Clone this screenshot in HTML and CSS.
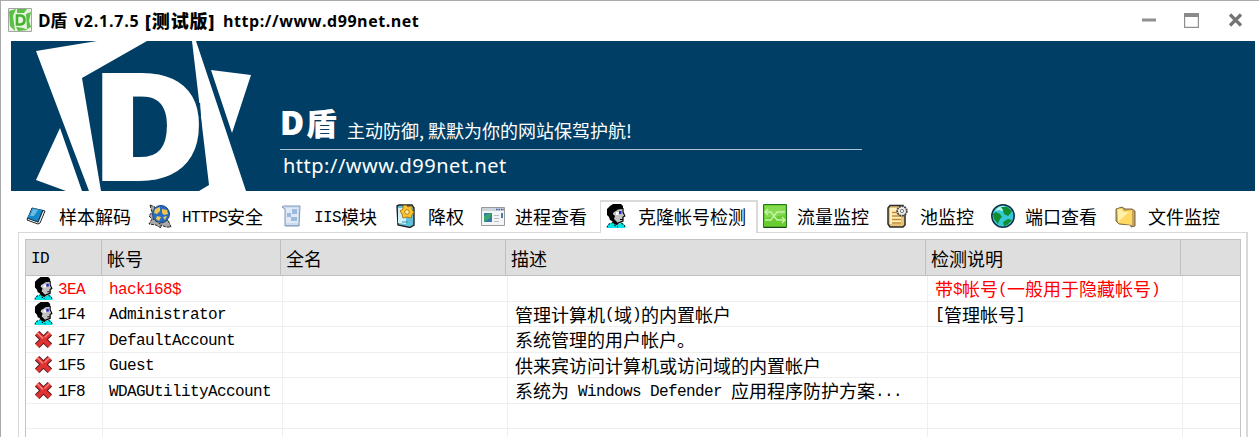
FILE: index.html
```html
<!DOCTYPE html>
<html lang="zh-CN">
<head>
<meta charset="utf-8">
<title>D盾</title>
<link rel="stylesheet" href="styles.css">
</head>
<body>
<svg width="0" height="0" class="defs">
  <defs>
    <symbol id="user" viewBox="0 0 20 24">
      <path fill="#00e5e8" d="M1 24 2 20.500 7 18 12 21 15 18 18 20 19.500 24Z"/>
      <path fill="none" stroke="#000" stroke-width="1" stroke-dasharray="2 1.500" d="M1 23.500 2 20.500 7 18.500M19 23 18 20.500 14 19M8 21 12 23"/>
      <path fill="#c3c3c3" d="M8 6 16 4 17 10 18.500 13 17 14 17 18 13 20 8 18Z"/>
      <path d="M4 2 7 0H15L17 2V5L12 5.500 10 7 8 8 7 10 9 12 8 15 10 17 13 20 11 21 8 20 6 17 4 16 3 13 1 11V5Z"/>
      <path fill="none" stroke="#000" stroke-width="1.200" d="M17 4V8L18.800 12 17 13V17L12 19"/>
      <path fill="#fff" d="M10 8H12.500V11H10Z"/>
      <path fill="#2222d0" d="M13 7H15.500V10H13Z"/>
      <path stroke="#000" d="M14 15.500H17"/>
    </symbol>
    <symbol id="cross" viewBox="0 0 18 18">
      <path fill="none" stroke="#4a1818" stroke-width="6" d="M3 3 15 15M15 3 3 15"/>
      <path fill="none" stroke="#e03232" stroke-width="4.300" d="M3 3 15 15M15 3 3 15"/>
      <path fill="none" stroke="#ff8a83" stroke-width="1.300" d="M3 2.500 8.500 8M14.500 2.500 10 7"/>
    </symbol>
  </defs>
</svg>
<div class="window">
  <header class="titlebar">
    <svg class="app-icon" viewBox="0 0 24 24">
      <path fill="#e6f4e1" stroke="#a5a5a5" d="M.5.5H23.500V23.500H.5Z"/>
      <path fill="#5bbf46" d="M1 3 8 1 5 8 7 23 2 18ZM9 1H19L16 5 9 5ZM18 6 23 4 21 13 23 19 19 21ZM8 19 15 20 20 22 10 23Z"/>
      <path fill="none" stroke="#43b02e" stroke-width="2.600" d="M9 7.500H12.500Q16.500 8 16.500 12T12.500 16.500H9Z"/>
    </svg>
    <div class="title">
      <span class="t-name">D盾</span><span class="t-ver">v2.1.7.5</span><span class="t-beta">[测试版]</span><span class="t-url">http://www.d99net.net</span>
    </div>
    <svg class="controls" viewBox="0 0 105 22">
      <path fill="#8f8f8f" d="M0 9.500H14V12.500H0Z"/>
      <path fill="#fff" stroke="#8f8f8f" stroke-width="1.200" d="M42.600 4.600H56.400V18.400H42.600Z"/>
      <path fill="#8a8a8a" d="M42 4H57V8H42Z"/>
      <path fill="none" stroke="#757575" stroke-width="3.200" d="M88 5.500 99 16.500M99 5.500 88 16.500"/>
    </svg>
  </header>
  <section class="banner">
    <svg class="logo" viewBox="0 0 262 150">
      <g fill="#fff">
        <path d="M25 10 86 0H136L71 37 90 150H78Z"/>
        <path d="M49 87 71 150H55L25 139Z"/>
        <path d="M181 0H185L235 150H188L198 144Z"/>
        <path d="M200 29 240 34 221 92Z"/>
      </g>
      <text class="logo-d" x="79" y="140" textLength="117" lengthAdjust="spacingAndGlyphs">D</text>
      <path fill="none" stroke="#003e65" stroke-width="1.200" d="M188.500 62 191.500 112"/>
    </svg>
    <div class="slogan">
      <div class="slogan-top"><span class="brand-d">D</span><span class="brand-cn">盾</span><span class="tagline">主动防御<i>,</i>默默为你的网站保驾护航<i>!</i></span></div>
      <div class="site">http://www.d99net.net</div>
    </div>
  </section>
  <nav class="tabs">
    <div class="tab"><svg class="icon" viewBox="0 0 24 24"><path fill="#fff" stroke="#222" d="M7 4 20 7 15 19 13 20 2 16Z"/><path fill="#1688c8" d="M8 4 18 6 13 18 2 14Z"/><path fill="#66bde6" d="M8 5 13 6 9 12 5 12Z"/><path fill="none" stroke="#10394f" stroke-width="1.300" d="M2 14 13 18 18 6"/></svg>样本解码</div>
    <div class="tab"><svg class="icon" viewBox="0 0 24 24"><path fill="#aaa" stroke="#222" stroke-dasharray="3 1" d="M2 1 7 3 5 15 12 20 20 16 23 23H18L13 21V24L8 21 1 20 4 15 1 12 4 8Z"/><circle cx="13" cy="10" r="8.500" fill="#286dc1" stroke="#174783"/><path fill="#f1c64f" d="M7 5 12 3 12 7 9 10 6 9ZM14 5 19 6 20 10 16 11 14 9ZM9 12 13 13 11 17 8 15ZM15 13 19 12 17 16Z"/></svg><span class="lat">HTTPS</span>安全</div>
    <div class="tab"><svg class="icon" viewBox="0 0 24 24"><path fill="#c9dcef" stroke="#8199b8" d="M3.500 2H20L19 22H5V5L2 3Z"/><path fill="#dfeaf6" d="M6 4H18V19H6Z"/><path fill="#9cbbdc" d="M7 9H11V13H7ZM12 5H17V10H12ZM11 13H17V17H11Z"/><path stroke="#8da6c3" d="M5 21.500H20"/></svg><span class="lat">IIS</span>模块</div>
    <div class="tab"><svg class="icon" viewBox="0 0 24 24"><path fill="#5fc0dc" stroke="#202020" stroke-width="1.400" d="M3 2 5 1H18L20 4V21L16 23.500 4 21Z"/><path fill="#d3f1f8" d="M4 4H12V20L4 19Z"/><path fill="#fac52e" stroke="#ae7417" d="M12 1 14 3 18 2 18 6 20 8 18 11 17 14 13 13 9 14 8 10 6 7 9 5 9 2Z"/><circle cx="13" cy="8" r="2.300" fill="#fff0a0" stroke="#bb7b14"/><path stroke="#338da8" d="M8 18H14"/></svg>降权</div>
    <div class="tab"><svg class="icon" viewBox="0 0 24 24"><path fill="#f4f5f6" stroke="#999" d="M.5 3.500H23.500V21.500H.5Z"/><path fill="#ccd3dc" d="M1 4H23V7H1Z"/><path stroke="#4355a0" stroke-width="1.500" stroke-dasharray="1.500 1" d="M15 5.500H23"/><path fill="#3477a8" d="M3 9H11V18H3Z"/><path fill="#3ca56b" d="M3 18V12L7 10 11 9 9 14Z"/><path stroke="#bbb" d="M13 11.500H18M13 14.500H18M13 17.500H18"/><path fill="#477db4" d="M20 9H22V14H20Z"/></svg>进程查看</div>
    <div class="tab active"><svg class="icon user"><use href="#user"/></svg>克隆帐号检测</div>
    <div class="tab"><svg class="icon" viewBox="0 0 24 24"><path fill="#69cd32" stroke="#26791c" d="M.5.5H23.500V23.500H.5Z"/><path fill="#86da52" d="M2 2H22V11L2 14Z"/><path fill="none" stroke="#c8f3a8" stroke-width="1.300" d="M2 8H8L14 16H22M2 16H8L14 8H22M5 5 2 8 5 11M19 13 22 16 19 19"/><path stroke="#174b12" stroke-width="1.500" d="M1 23.500H23"/></svg>流量监控</div>
    <div class="tab"><svg class="icon" viewBox="0 0 24 24"><path fill="#e7c27a" stroke="#292929" stroke-width="1.500" d="M4 1.500H17V5L19 8V21L17 23H4L2 20V4Z"/><path fill="#fff1bc" d="M4 4H15V20H4Z"/><path stroke="#c6862c" stroke-width="1.500" d="M6 8.500H11M6 12H15M6 15.500H15M6 19H15"/><circle cx="16" cy="7" r="4.800" fill="#ececec" stroke="#444" stroke-width="1.800" stroke-dasharray="2 .7"/><circle cx="16" cy="7" r="1.600" fill="#fff" stroke="#777"/></svg>池监控</div>
    <div class="tab"><svg class="icon" viewBox="0 0 24 24"><circle cx="12" cy="12" r="11.200" fill="#35c8d6" stroke="#102f43" stroke-width="1.500"/><path fill="#b9f3e7" d="M4 7Q7 2 13 2L15 5 11 7 8 6Z"/><path fill="#118d30" d="M2 10 5 8 9 10 11 13 9 15 7 20 3 15ZM10 3H16L21 7 19 10 17 12 13 10 12 6ZM12 18 17 15 21 16 16 21 13 22Z"/></svg>端口查看</div>
    <div class="tab"><svg class="icon" viewBox="0 0 24 24"><path fill="#c7a35c" stroke="#796643" d="M2 5 8 3 11 5H18L21 7V22L17 23V21L5 20 2 17Z"/><path fill="#ffd964" d="M3 5 8 4 10 7 18 6V21L4 19Z"/><path fill="#fff1a8" d="M4 6 8 5 9 8H15L5 17H4Z"/></svg>文件监控</div>
  </nav>
  <main class="page">
    <div class="grid">
      <div class="row head"><div><span class="lat">ID</span></div><div>帐号</div><div>全名</div><div>描述</div><div>检测说明</div><div></div></div>
      <div class="rows">
        <div class="row danger"><div><svg class="row-icon user"><use href="#user"/></svg><span class="lat">3EA</span></div><div><span class="lat">hack168$</span></div><div></div><div></div><div>带<span class="lat">$</span>帐号<span class="lat">(</span>一般用于隐藏帐号<span class="lat">)</span></div><div></div></div>
        <div class="row"><div><svg class="row-icon user"><use href="#user"/></svg><span class="lat">1F4</span></div><div><span class="lat">Administrator</span></div><div></div><div>管理计算机<span class="lat">(</span>域<span class="lat">)</span>的内置帐户</div><div><span class="lat">[</span>管理帐号<span class="lat">]</span></div><div></div></div>
        <div class="row"><div><svg class="row-icon"><use href="#cross"/></svg><span class="lat">1F7</span></div><div><span class="lat">DefaultAccount</span></div><div></div><div>系统管理的用户帐户。</div><div></div><div></div></div>
        <div class="row"><div><svg class="row-icon"><use href="#cross"/></svg><span class="lat">1F5</span></div><div><span class="lat">Guest</span></div><div></div><div>供来宾访问计算机或访问域的内置帐户</div><div></div><div></div></div>
        <div class="row"><div><svg class="row-icon"><use href="#cross"/></svg><span class="lat">1F8</span></div><div><span class="lat">WDAGUtilityAccount</span></div><div></div><div>系统为<span class="lat"> Windows Defender </span>应用程序防护方案<span class="lat">...</span></div><div></div><div></div></div>
        <div class="row"><div></div><div></div><div></div><div></div><div></div><div></div></div>
        <div class="row"><div></div><div></div><div></div><div></div><div></div><div></div></div>
      </div>
    </div>
  </main>
</div>
</body>
</html>
```
FILE: styles.css
```css
* { box-sizing: border-box; }
body {
  margin: 0;
  background: #fff;
  color: #000;
  font: 18px/24px "Noto Sans CJK SC", sans-serif;
  overflow: hidden;
}
.defs { position: absolute; }
.window {
  height: 437px;
  border-top: 1px solid #aaa;
  border-left: 1px solid #aaa;
  overflow: hidden;
  display: flex;
  flex-direction: column;
}
.titlebar {
  flex: 0 0 40px;
  display: flex;
  align-items: center;
  padding: 0 12px 2px 7px;
}
.app-icon { width: 24px; height: 24px; flex: none; }
.title {
  flex: 1;
  display: flex;
  margin-left: 6px;
  padding-top: 2px;
  font: 700 16px/24px "Open Sans", "Noto Sans CJK SC", sans-serif;
  white-space: nowrap;
}
.t-name { width: 36px; font-size: 17px; letter-spacing: -.3px; }
.t-ver { width: 71px; letter-spacing: .75px; }
.t-beta { width: 78px; font-weight: 900; font-size: 18px; letter-spacing: .9px; }
.t-url { letter-spacing: .55px; }
.controls { width: 105px; height: 22px; flex: none; }

.banner {
  flex: 0 0 150px;
  margin: 0 4px 0 10px;
  background: #003e65;
  color: #fff;
  display: flex;
}
.logo { width: 262px; height: 150px; flex: none; }
.logo-d {
  font: 800 151px "Open Sans", sans-serif;
  fill: #fff;
}
.slogan { padding: 64px 0 0 7px; }
.slogan-top {
  width: 582px;
  height: 45px;
  border-bottom: 1px solid #a9c1d0;
  display: flex;
  align-items: baseline;
  line-height: 36px;
}
.brand-d { font: 800 33px/34px "Open Sans", sans-serif; width: 26px; }
.brand-cn { font-weight: 900; font-size: 31px; line-height: 34px; width: 41px; }
.tagline { font-size: 18px; white-space: nowrap; padding-top: 3px; position: relative; top: 3px; }
.tagline i { display: inline-block; width: 9px; font-style: normal; }
.site {
  font: 20px/32px "Noto Sans", sans-serif;
  letter-spacing: .5px;
  padding-left: 3px;
}

.tabs {
  flex: 0 0 41px;
  min-height: 0;
  display: flex;
  padding: 9px 0 0 19px;
}
.tab {
  height: 32px;
  display: flex;
  align-items: center;
  padding: 0 12px 0 5px;
  white-space: nowrap;
}
.tab.active {
  height: 33px;
  margin-left: 1px;
  padding: 0 10px 3px 3px;
  border: 2px solid #d9d9d9;
  border-width: 2px 2px 0 1px;
  background: #fff;
  z-index: 1;
}
.icon { width: 24px; height: 24px; flex: none; margin-right: 10px; }
.lat {
  font-family: "Liberation Mono", monospace;
  font-size: 16px;
  letter-spacing: -.6px;
  white-space: pre;
  padding-top: 3px;
}

.page {
  flex: 1;
  margin: 0 11px 0 17px;
  padding: 6px 5px 0 6px;
  border: 1px solid #d9d9d9;
  border-right-width: 2px;
  border-bottom: 0;
}
.grid {
  height: 200px;
  border: 1px solid #c4c4c4;
  border-bottom: 0;
}
.row {
  display: grid;
  grid-template-columns: 77px 180px 225px 420px 255px 1fr;
  height: 25.5px;
}
.row > div {
  display: flex;
  align-items: center;
  height: 100%;
  min-height: 0;
  border-right: 1px solid #efefef;
  border-bottom: 1px solid #efefef;
  padding-left: 6px;
  white-space: nowrap;
}
.row { grid-template-rows: 100%; }
.row > div:last-child { border-right: 0; }
.row.head {
  grid-template-columns: 76px 179px 225px 420px 255px 1fr;
  height: 36px;
  background: #dedede;
}
.row.head > div { border-color: #bfbfbf; padding-left: 5px; }
.rows .row > div:nth-child(4),
.rows .row > div:nth-child(5) { padding-left: 7px; }
.rows .row > div:first-child { padding-left: 8px; }
.row-icon { width: 19px; height: 19px; margin-right: 5px; flex: none; }
.row-icon.user { width: 19px; height: 23px; }
.danger { color: #f00; }
```
